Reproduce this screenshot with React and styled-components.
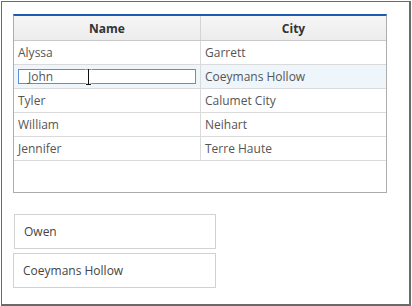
import React from "react";
import styled, { createGlobalStyle } from "styled-components";

const GlobalStyle = createGlobalStyle`
  html, body {
    margin: 0;
    padding: 0;
    background: #fff;
  }
  body {
    font-family: "Open Sans", "Noto Sans", sans-serif;
    font-size: 12px;
  }
`;

const rows = [
  { name: "Alyssa", city: "Garrett" },
  { name: "John", city: "Coeymans Hollow", editing: true },
  { name: "Tyler", city: "Calumet City" },
  { name: "William", city: "Neihart" },
  { name: "Jennifer", city: "Terre Haute" },
];

const App = () => {
  return (
    <>
      <GlobalStyle />
      <Frame>
        <Grid>
          <HeaderRow>
            <HeaderCell>Name</HeaderCell>
            <HeaderCell last>City</HeaderCell>
          </HeaderRow>
          {rows.map((row) => (
            <Row key={row.name} selected={row.editing}>
              <Cell>
                {row.editing ? (
                  <EditBox>
                    <EditText>{row.name}</EditText>
                    <Caret width="7" height="16" viewBox="0 0 7 16">
                      <path d="M0.5 0.5h6M3.5 0.5v15M0.5 15.5h6" stroke="#fff" strokeWidth="2" />
                      <path d="M1 0.5h5M3.5 0.5v15M1 15.5h5" stroke="#111" strokeWidth="1" />
                      <path d="M1 0.5h2M4 0.5h2" stroke="#c98a2c" strokeWidth="1" />
                    </Caret>
                  </EditBox>
                ) : (
                  row.name
                )}
              </Cell>
              <Cell last>{row.city}</Cell>
            </Row>
          ))}
        </Grid>
        <Fields>
          <Field indent>Owen</Field>
          <Field>Coeymans Hollow</Field>
        </Fields>
      </Frame>
    </>
  );
};

const Frame = styled.div`
  box-sizing: border-box;
  margin: 1px 0 0 1px;
  width: 410px;
  height: 305px;
  border: 1px solid #6a6a6a;
  border-right-width: 2px;
  border-bottom-width: 2px;
  padding: 12px 0 0 11px;
`;

const Grid = styled.div`
  box-sizing: border-box;
  width: 374px;
  height: 179px;
  border: 1px solid #acacac;
  border-top: 2px solid #1c5db3;
  background: #fff;
`;

const HeaderRow = styled.div`
  display: grid;
  grid-template-columns: 187px 185px;
  height: 24px;
  border-bottom: 1px solid #c8c8c8;
  background: linear-gradient(#f6f6f6, #ececec);
`;

const HeaderCell = styled.div`
  display: flex;
  align-items: center;
  justify-content: center;
  font-weight: 700;
  color: #333;
  border-right: ${(p) => (p.last ? "none" : "1px solid #d4d4d4")};
`;

const Row = styled.div`
  display: grid;
  grid-template-columns: 187px 185px;
  height: 23px;
  border-bottom: 1px solid #dadada;
  background: ${(p) => (p.selected ? "#eef6fc" : "#fff")};
`;

const Cell = styled.div`
  display: flex;
  align-items: center;
  padding-left: 4px;
  color: #555;
  white-space: nowrap;
  overflow: hidden;
  border-right: ${(p) => (p.last ? "none" : "1px solid #dadada")};
`;

const EditBox = styled.div`
  position: relative;
  box-sizing: border-box;
  display: flex;
  align-items: center;
  width: 178px;
  height: 15px;
  padding-left: 9px;
  background: #fff;
  border: 1px solid #5d8fd9;
`;

const EditText = styled.span`
  color: #555;
`;

const Caret = styled.svg`
  position: absolute;
  left: 66px;
  top: -1px;
`;

const Fields = styled.div`
  display: flex;
  flex-direction: column;
  gap: 4px;
  margin-top: 21px;
`;

const Field = styled.div`
  box-sizing: border-box;
  display: flex;
  align-items: center;
  width: ${(p) => (p.indent ? "202px" : "203px")};
  margin-left: ${(p) => (p.indent ? "1px" : "0")};
  height: 35px;
  padding-left: 9px;
  border: 1px solid #d2d2d2;
  color: #444;
`;

export default App;
